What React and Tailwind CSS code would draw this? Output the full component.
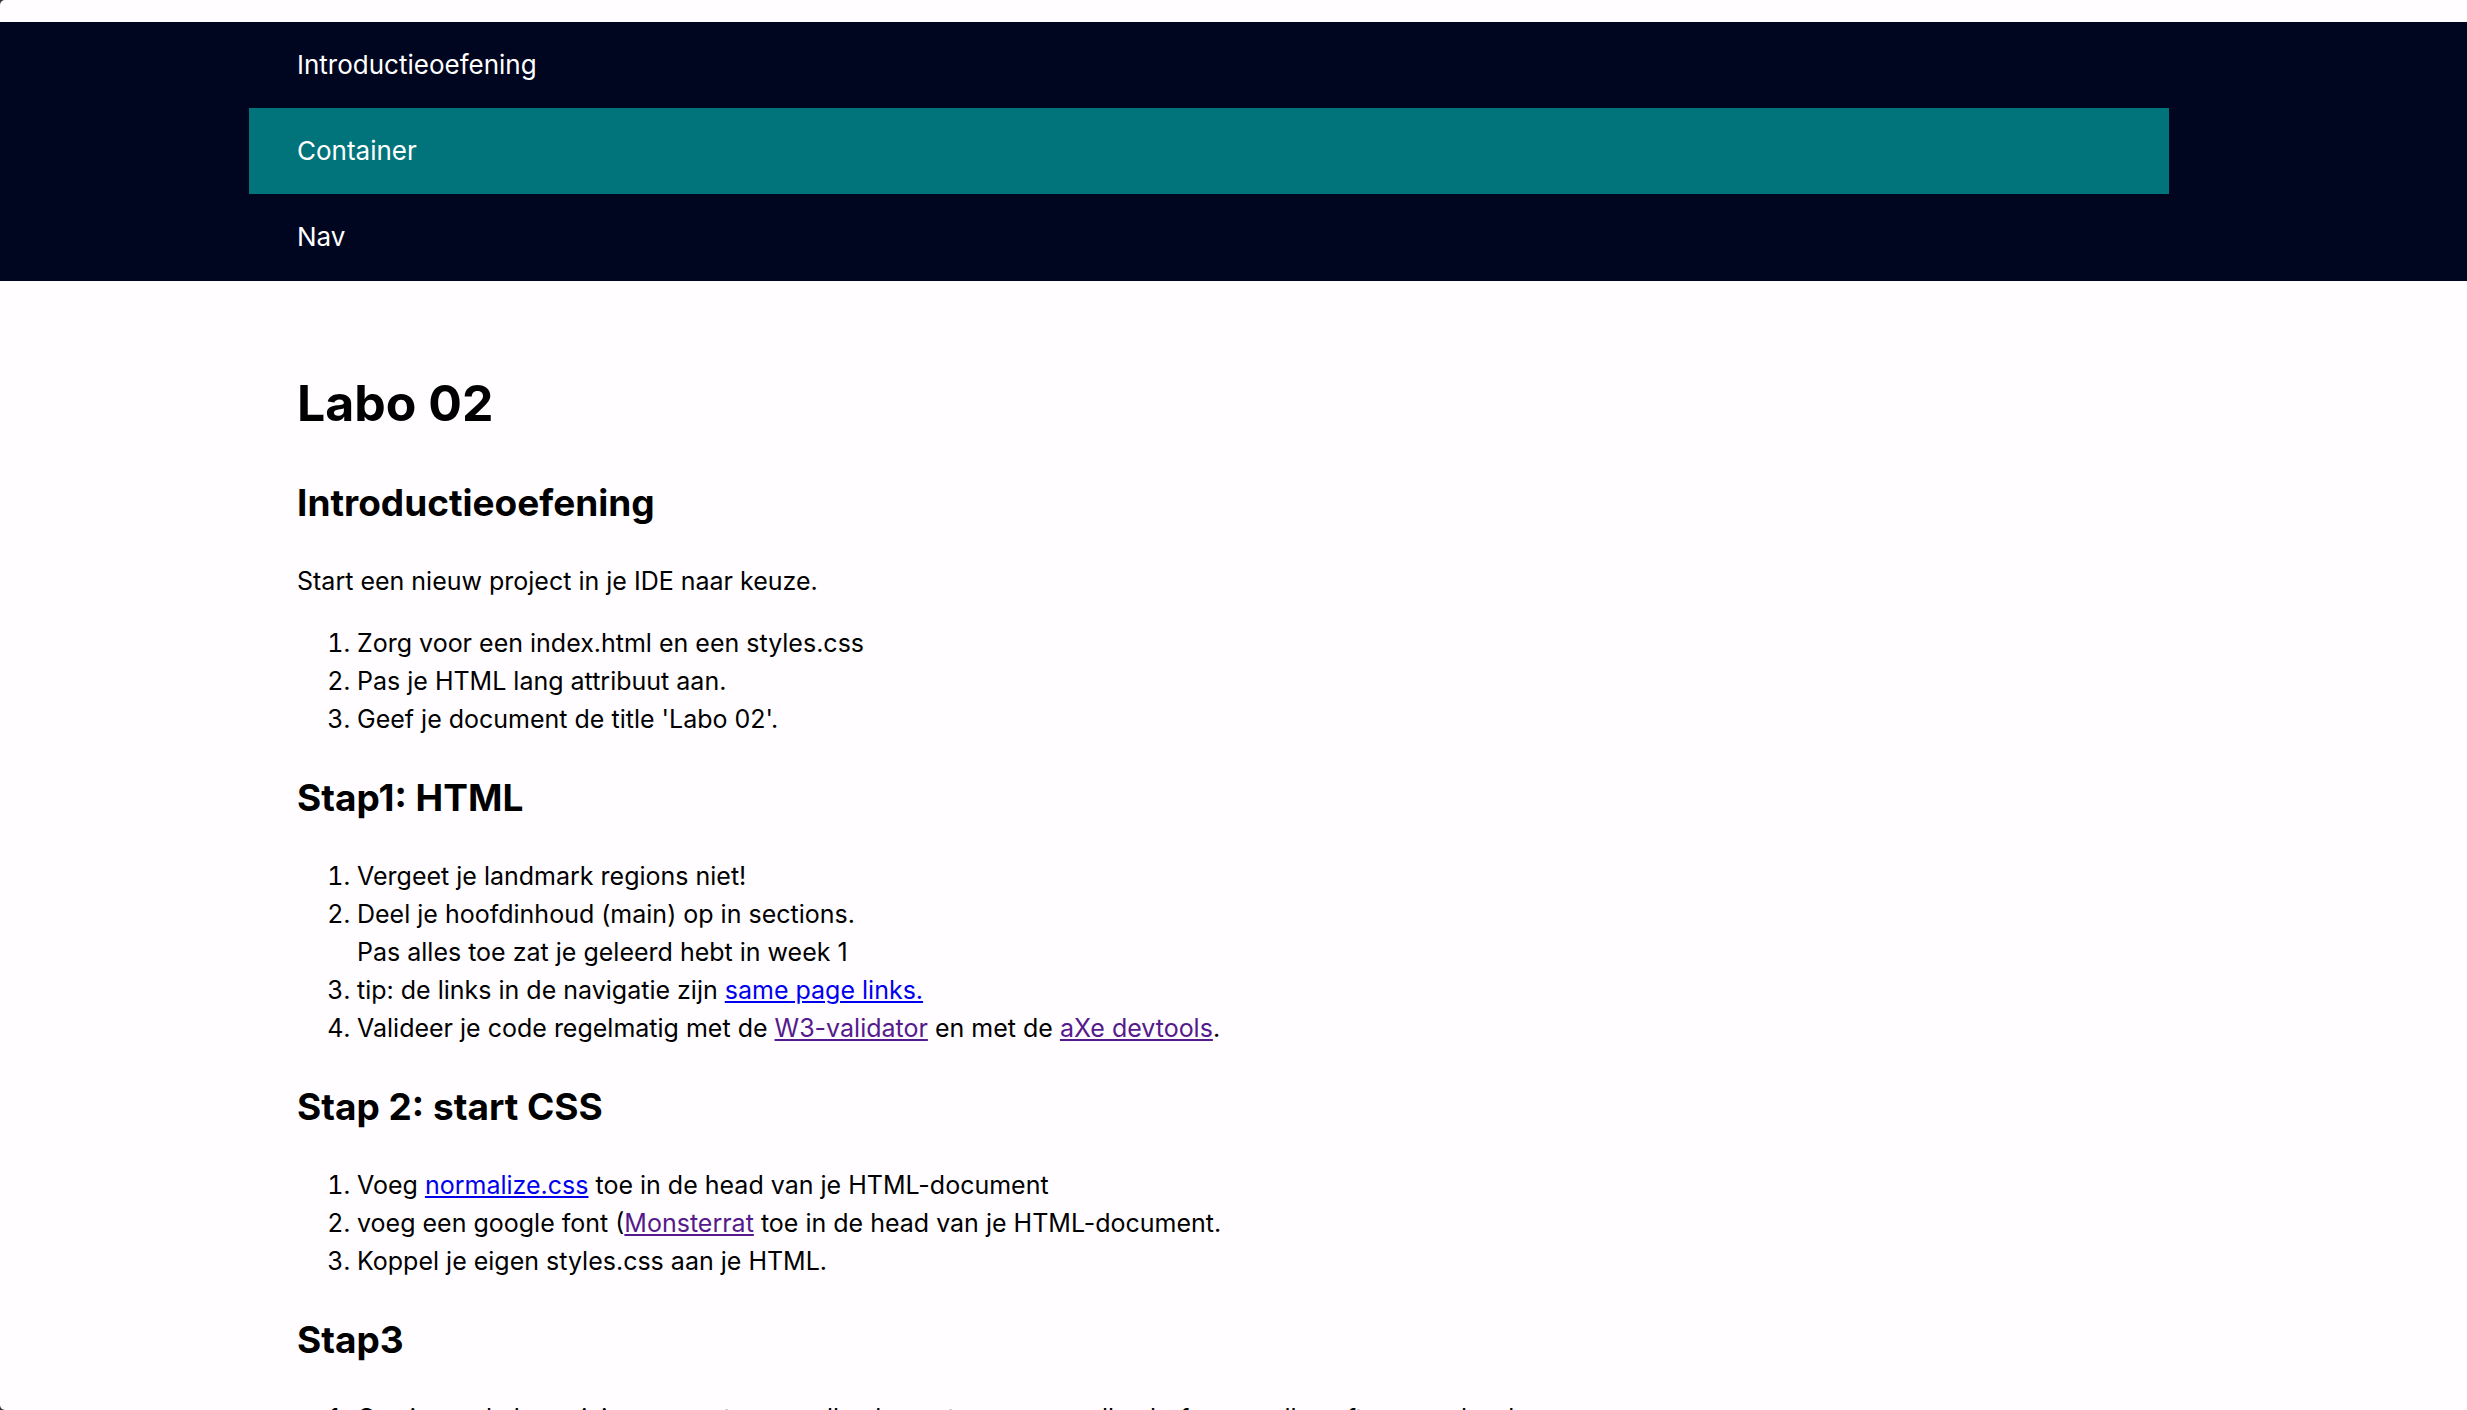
import React from 'react';

const navItems = [
  { href: '#introductie', label: 'Introductieoefening' },
  { href: '#container', label: 'Container', active: true },
  { href: '#nav', label: 'Nav' },
];

const Link = ({ href, visited, children }) => (
  <a
    href={href}
    className={`underline decoration-2 underline-offset-2 ${visited ? 'text-[#551a8b]' : 'text-[#0000ee]'}`}
  >
    {children}
  </a>
);

const Section = ({ id, title, intro, children }) => (
  <section id={id} className="mb-[31px]">
    <h2 className="mb-[30px] text-[37px] leading-[58px] font-bold">{title}</h2>
    {intro && <p className="mb-6">{intro}</p>}
    <ol className="list-decimal pl-[60px]">{children}</ol>
  </section>
);

const App = () => {
  return (
    <div className="bg-[#333333]">
      <div className="h-screen overflow-hidden rounded-l-[5px] bg-[#fffdff] pt-[22px] font-['Inter',sans-serif] text-[25px] leading-[38px] text-black">
        {/* Navigation */}
        <header className="bg-[#000520] pr-[49px] pb-px text-white">
          <nav className="mx-auto max-w-[1920px]">
            <ul className="text-[26px]">
              {navItems.map((item) => (
                <li key={item.href}>
                  <a
                    href={item.href}
                    className={`block px-12 py-6 leading-[38px] ${item.active ? 'bg-[#00747a]' : ''}`}
                  >
                    {item.label}
                  </a>
                </li>
              ))}
            </ul>
          </nav>
        </header>

        {/* Content */}
        <div className="pr-[49px]">
          <main className="mx-auto max-w-[1920px] px-12 pt-[84px]">
            <h1 className="mb-8 text-[50px] leading-[77px] font-bold">Labo 02</h1>

            <Section
              id="introductie"
              title="Introductieoefening"
              intro="Start een nieuw project in je IDE naar keuze."
            >
              <li>Zorg voor een index.html en een styles.css</li>
              <li>Pas je HTML lang attribuut aan.</li>
              <li>Geef je document de title 'Labo 02'.</li>
            </Section>

            <Section id="container" title="Stap1: HTML">
              <li>Vergeet je landmark regions niet!</li>
              <li>
                Deel je hoofdinhoud (main) op in sections.
                <br />
                Pas alles toe zat je geleerd hebt in week 1
              </li>
              <li>
                tip: de links in de navigatie zijn <Link href="#nav">same page links.</Link>
              </li>
              <li>
                Valideer je code regelmatig met de <Link href="#validator" visited>W3-validator</Link>{' '}
                en met de <Link href="#axe" visited>aXe devtools</Link>.
              </li>
            </Section>

            <Section id="nav" title="Stap 2: start CSS">
              <li>
                Voeg <Link href="#normalize">normalize.css</Link> toe in de head van je HTML-document
              </li>
              <li>
                voeg een google font (<Link href="#font" visited>Monsterrat</Link> toe in de head van
                je HTML-document.
              </li>
              <li>Koppel je eigen styles.css aan je HTML.</li>
            </Section>

            <Section id="stap3" title="Stap3">
              <li>
                Corrigeer de box-sizing property voor alle elementen en voor alle ::before en alle
                ::after pseudo-el.
              </li>
            </Section>
          </main>
        </div>
      </div>
    </div>
  );
};

export default App;
